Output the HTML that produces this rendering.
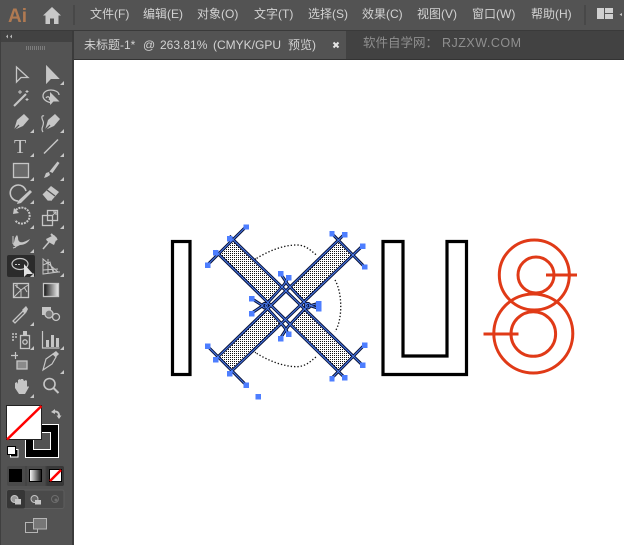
<!DOCTYPE html>
<html><head><meta charset="utf-8">
<style>
html,body{margin:0;padding:0;width:624px;height:545px;overflow:hidden;background:#fff}
svg{position:absolute;left:0;top:0}
text{font-family:"Liberation Sans","Noto Sans CJK SC",sans-serif}
</style></head><body>
<svg width="624" height="545" viewBox="0 0 624 545" xmlns="http://www.w3.org/2000/svg">
<defs>
<pattern id="dots" width="6" height="6" patternUnits="userSpaceOnUse"><rect width="6" height="6" fill="#fff"/><rect width="3" height="3" fill="#111"/></pattern>
</defs>
<!-- chrome -->
<rect width="624" height="545" fill="#535353"/>
<rect x="0" y="30" width="624" height="1" fill="#3a3a3a"/>
<rect x="72" y="31" width="2" height="514" fill="#3b3b3b"/>
<rect x="0" y="31" width="1" height="514" fill="#3f3f3f"/>
<rect x="1" y="31" width="71" height="11" fill="#424242"/>
<rect x="74" y="31" width="550" height="29" fill="#424242"/>
<rect x="74" y="31" width="272" height="28" fill="#535353"/>
<rect x="74" y="59" width="550" height="1" fill="#333"/>
<rect x="74" y="60" width="550" height="485" fill="#fff"/>
<!-- top bar -->
<text x="8" y="22" font-size="19" font-weight="bold" fill="#b07a52">Ai</text>
<path d="M43 15.500L52 7l9 8.500h-2.500V24h-4.500v-5.500h-4V24H45.500v-8.500z" fill="#c8c8c8"/>
<rect x="73" y="5" width="2" height="20" fill="#484848"/>
<g font-size="12" fill="#d2d2d2">
<text x="90" y="18">文件(F)</text><text x="143" y="18">编辑(E)</text><text x="197" y="18">对象(O)</text><text x="254" y="18">文字(T)</text><text x="308" y="18">选择(S)</text><text x="362" y="18">效果(C)</text><text x="417" y="18">视图(V)</text><text x="472" y="18">窗口(W)</text><text x="531" y="18">帮助(H)</text>
</g>
<rect x="584" y="5" width="2" height="20" fill="#484848"/>
<rect x="597" y="8" width="7" height="11" fill="#d0d0d0"/><rect x="605" y="8" width="8" height="5" fill="#d0d0d0"/><rect x="605" y="14" width="8" height="5" fill="#d0d0d0"/>
<path d="M622 13l-2.500 1.500 2.500 1.500z" fill="#c8c8c8"/>
<!-- tabs -->
<text y="49" font-size="12" fill="#d2d2d2"><tspan x="84">未标题-1*</tspan><tspan x="143">@</tspan><tspan x="160">263.81%</tspan><tspan x="213">(CMYK/GPU</tspan><tspan x="288">预览)</tspan></text>
<path d="M333.500 42.500l5 5m0-5l-5 5" stroke="#e6e6e6" stroke-width="2" fill="none"/>
<text y="47" font-size="12.500" fill="#8f8f8f"><tspan x="363">软件自学网：</tspan><tspan x="442" letter-spacing="0.500">RJZXW.COM</tspan></text>
<!-- toolbar header -->
<path d="M8 34.500l-2 2 2 2zM12 34.500l-2 2 2 2z" fill="#b8b8b8"/>
<g fill="#7c7c7c"><rect x="26" y="46" width="1" height="4"/><rect x="28" y="46" width="1" height="4"/><rect x="30" y="46" width="1" height="4"/><rect x="32" y="46" width="1" height="4"/><rect x="34" y="46" width="1" height="4"/><rect x="36" y="46" width="1" height="4"/><rect x="38" y="46" width="1" height="4"/><rect x="40" y="46" width="1" height="4"/><rect x="42" y="46" width="1" height="4"/><rect x="44" y="46" width="1" height="4"/></g>
<!-- active tool -->
<rect x="7" y="255" width="28" height="22" rx="2" fill="#2b2b2b"/>
<!-- tool icons -->
<g fill="none" stroke="#c6c6c6" stroke-width="1.300">
<path d="M16.500 67v15l4.500-4.500h7z"/>
<path d="M46.700 66.500v16l4-4.200h7.500z" fill="#c6c6c6"/>
<path d="M14 106L26 94" stroke-width="2"/><path d="M20 90v4M18 92h4M27 90v3M25.500 91.500h3M27 98v3M25.500 99.500h3" stroke-width="1"/>
<path d="M52 103c-6-1-9-4-9-7 0-4 4-6 8-6s8 2 8 5M46 98c2-3 5 0 3 2" stroke-width="1.300"/><path d="M50 92v13l3.500-3.500h6z" fill="#c6c6c6" stroke="none"/>
<path d="M14 130l3-10 7-6 5 5-6 7z" fill="#c6c6c6" stroke="none"/><path d="M14 130l5-5" stroke="#535353"/>
<path d="M43 132c-3-4 2-7 0-11s-1-6 1-5" stroke-width="1.200"/><path d="M45 130l3-10 7-6 5 5-6 7z" fill="#c6c6c6" stroke="none"/><path d="M45 130l5-5" stroke="#535353"/>
<text x="14" y="153" font-size="20" style="font-family:'Liberation Serif',serif" fill="#c6c6c6" stroke="none">T</text>
<path d="M44 153.500L58 139.500" stroke-width="1.500"/>
<rect x="13.500" y="163.500" width="15" height="14" fill="#6a6a6a" stroke-width="1.300"/>
<path d="M44 178l2-5 3-1 1 3-3 2zM49.500 171.500l8-10 2 1.500-7 10z" fill="#c6c6c6" stroke="none"/>
<path d="M26 191a8 8 0 1 0-8 10" stroke-width="1.600"/><path d="M18 201l12-11 2 2-11 11-4 1z" fill="#c6c6c6" stroke="none"/>
<path d="M43 194l8-8 8 6-7 8h-4z" fill="#c6c6c6" stroke="none"/><path d="M47 190l8 6" stroke="#535353"/><path d="M43 194l5 6h4" stroke="#c6c6c6"/>
<path d="M16 210a8 8 0 1 1-1 10" stroke-dasharray="2 1" stroke-width="2"/><path d="M14 208l-1 6 6-1z" fill="#c6c6c6" stroke="none"/>
<rect x="42.500" y="215.500" width="10" height="10"/><rect x="47.500" y="210.500" width="10" height="10"/><path d="M52 216l4-4M53 212h3v3" stroke-width="1"/>
<path d="M13 245c2-4 1-7 4-10 2 3 0 5 3 7 3 1 6-1 10-3-2 4-6 6-10 6l-4 2z" fill="#c6c6c6" stroke="none"/><path d="M13 236v8M16 247l-3 1" stroke-width="1"/>
<path d="M43 249l6-7" stroke-width="1.500"/><path d="M46 239l8-4 3 3-3 7-2-1-5-3z" fill="#c6c6c6" stroke="none"/><path d="M51 234l6 6" stroke-width="2"/>
<ellipse cx="20" cy="264" rx="8" ry="5.500" stroke-width="1.200"/><path d="M15 264.500h5" stroke-width="1" stroke-dasharray="2 1"/><path d="M24 264v13l3-3h6z" fill="#e0e0e0" stroke="none"/>
<path d="M43 259v15l15-2-15-13zM48 259v14M43 265l7-3 3 10M43 270l15-1" stroke-width="1"/><path d="M50 264l4 8h6" stroke-width="1"/>
<rect x="13.500" y="283.500" width="15" height="14"/><path d="M14 297l7-7 7-5M21 290v7M21 290l-6-5M17 288v-4M24 287l3 5" stroke-width="1"/>
<defs><linearGradient id="gr" x1="0" x2="1"><stop offset="0" stop-color="#111"/><stop offset="1" stop-color="#eee"/></linearGradient></defs>
<rect x="43.500" y="283.500" width="15" height="13" fill="url(#gr)"/>
<path d="M13 321l2 2 10-10-2-2z" stroke-width="1.300"/><path d="M22 310l4-4 2 3-2 4z" fill="#c6c6c6" stroke="none"/>
<path d="M42 307h9v8h-9z" fill="#c6c6c6" stroke="none"/><circle cx="49" cy="314" r="4" fill="#777" stroke="#c6c6c6"/><circle cx="56" cy="317" r="3.500" fill="#535353"/>
<path d="M12 334h2M15 334h2M12 337h2M15 337h2M12 340h2" stroke-width="1.500"/><rect x="20.500" y="335.500" width="9" height="13"/><circle cx="25" cy="342" r="2.200"/><rect x="23" y="331" width="4" height="4" fill="#c6c6c6" stroke="none"/>
<path d="M42.500 331v17h17" stroke-width="1.200"/><rect x="46" y="340" width="3" height="7" fill="#c6c6c6" stroke="none"/><rect x="51" y="335" width="3" height="12" fill="#c6c6c6" stroke="none"/><rect x="56" y="338" width="3" height="9" fill="#c6c6c6" stroke="none"/>
<path d="M11 355.500h7M15.500 352v7" stroke-width="1.200"/><path d="M17 361h10v8H17z" fill="#8a8a8a" stroke="#c6c6c6"/>
<path d="M43 370l3-11 7-5 3 3-4 7z" stroke-width="1.200"/><path d="M52 354l4-3 3 3-3 3z" fill="#c6c6c6" stroke="none"/>
<path d="M15 386v-5l2-1 1 2v-4l2-1 1 1v-1h2l1 2 2-1 1 1v6l1-1 1 1-4 7h-6z" fill="#c6c6c6" stroke="none" transform="translate(0,2)"/>
<circle cx="49.500" cy="384" r="5.500" stroke-width="1.600"/><path d="M53.500 388l5 5" stroke-width="2"/>
</g>
<!-- flyout triangles -->
<g fill="#c6c6c6">
<path d="M64 81v4h-4z"/>
<path d="M34 129v4h-4zM64 129v4h-4zM34 153v4h-4zM64 153v4h-4zM34 177v4h-4zM64 177v4h-4zM34 200v4h-4zM64 200v4h-4zM34 225v4h-4zM64 225v4h-4zM34 249v4h-4zM64 249v4h-4zM34 273v4h-4zM64 273v4h-4zM34 322v4h-4zM34 346v4h-4zM64 346v4h-4zM64 370v4h-4zM34 394v4h-4z"/>
</g>
<!-- color area -->
<path d="M56 409l-4 3 4 2v-1.500c2 0 3 1 3 3h-1.500l2.500 3.500 2.500-3.500H61c0-3-2-5-5-5z" fill="#c6c6c6" transform="translate(-1,0)"/>
<rect x="25.500" y="424.500" width="33" height="33" fill="#000" stroke="#fff"/>
<rect x="33.500" y="432.500" width="17" height="17" fill="#535353" stroke="#fff"/>
<rect x="6.500" y="405.500" width="35" height="34" fill="#fff" stroke="#222"/>
<path d="M7 439.500L41.500 406" stroke="#f00" stroke-width="2.500"/>
<rect x="10.500" y="449.500" width="7.500" height="7.500" fill="#000" stroke="#fff"/>
<rect x="7.500" y="446.500" width="8" height="8" fill="#fff" stroke="#000"/>
<!-- colour mode row -->
<rect x="7" y="466" width="57" height="20" rx="2" fill="#4a4a4a"/>
<rect x="46" y="466" width="18" height="20" rx="2" fill="#383838"/>
<rect x="25.500" y="466" width="1" height="20" fill="#3f3f3f"/><rect x="45.500" y="466" width="1" height="20" fill="#3f3f3f"/>
<rect x="9" y="469" width="13" height="13" fill="#000"/>
<defs><linearGradient id="gw" x1="0" x2="1"><stop offset="0" stop-color="#fff"/><stop offset="1" stop-color="#111"/></linearGradient></defs>
<rect x="29.500" y="469.500" width="12" height="12" fill="url(#gw)" stroke="#000"/>
<rect x="49.500" y="469.500" width="12" height="12" fill="#fff" stroke="#000"/>
<path d="M50 481L61 470" stroke="#f00" stroke-width="2.500"/>
<!-- draw modes -->
<rect x="7" y="490" width="57" height="18.500" rx="2" fill="#4a4a4a" stroke="#5d5d5d"/>
<rect x="7" y="490" width="18" height="18.500" rx="2" fill="#363636"/>
<circle cx="14.500" cy="499" r="3.500" fill="#999" stroke="#c6c6c6"/><rect x="15" y="499" width="6" height="5.500" fill="#c6c6c6"/>
<circle cx="34.500" cy="499" r="3.500" fill="#666" stroke="#c6c6c6"/><rect x="35" y="500" width="6" height="4.500" fill="#c6c6c6"/>
<circle cx="55" cy="499" r="3.500" fill="#4a4a4a" stroke="#6d6d6d"/><circle cx="56" cy="500" r="1.500" fill="#6d6d6d"/>
<!-- screen mode -->
<rect x="25.500" y="522.500" width="12" height="10" fill="none" stroke="#b5b5b5"/>
<rect x="33.500" y="518.500" width="13" height="10.500" fill="#777" stroke="#b5b5b5"/>

<!-- artwork: I -->
<rect x="172.500" y="241.500" width="17.500" height="133" fill="#fff" stroke="#000" stroke-width="3.200"/>
<!-- U -->
<path d="M383 241.500H403V356H447V241.500H466.500V374.500H383Z" fill="#fff" stroke="#000" stroke-width="3.200"/>
<!-- 8 -->
<g fill="none" stroke="#e03a17" stroke-width="3">
<circle cx="534.300" cy="275" r="35"/>
<circle cx="536" cy="275" r="18"/>
<circle cx="533.300" cy="333.500" r="39.500"/>
<circle cx="533.300" cy="334" r="22.300"/>
<path d="M546 275H577M483.500 334H518.500"/>
</g>
<!-- X artwork -->
<g transform="translate(200,225) scale(0.33333)">
<g fill="none" stroke="#111" stroke-width="4" stroke-dasharray="4 6">
<path d="M170 100C205 78 250 60 290 60C320 60 335 80 352 92"/>
<path d="M405 165C428 205 428 285 405 320"/>
<path d="M170 385C205 407 250 425 290 425C320 425 335 405 352 393"/>
<path d="M365 108L385 120M365 378L385 365M150 112L170 100M150 372L170 385" stroke-dasharray="3 3"/>
</g>
<!-- band fills -->
<g fill="url(#dots)" shape-rendering="crispEdges">
<path d="M58 90L102 47L245 187L203 231Z"/>
<path d="M458 90L414 47L271 187L313 231Z"/>
<path d="M58 394L100 437L245 297L203 253Z"/>
<path d="M458 394L415 437L271 297L313 253Z"/>
</g>
<g fill="none" stroke="#081238" stroke-width="9">
<path d="M22 120L138 5M395 25L493 125M22 363L138 480M493 360L395 460"/>
<path d="M46 78L433 457M88 33L487 420M487 63L88 445M433 28L46 403"/>
<circle cx="195" cy="242" r="7"/><circle cx="323" cy="242" r="7"/>
<path d="M195 242L253 178L265 157M323 242L263 178L241 145M195 242L253 306L265 327M323 242L263 306L241 340"/>
<path d="M154 220L188 242L154 265M355 235L330 242L355 250"/>
</g>
<g fill="none" stroke="#4a7cf0" stroke-width="3">
<path d="M22 120L138 5M395 25L493 125M22 363L138 480M493 360L395 460"/>
<path d="M46 78L433 457M88 33L487 420M487 63L88 445M433 28L46 403"/>
<circle cx="195" cy="242" r="7"/><circle cx="323" cy="242" r="7"/>
<path d="M195 242L253 178L265 157M323 242L263 178L241 145M195 242L253 306L265 327M323 242L263 306L241 340"/>
<path d="M154 220L188 242L154 265M355 235L330 242L355 250"/>
</g>
<!-- handles -->
<g fill="#4d7eff" shape-rendering="crispEdges">
<rect x="15" y="113" width="16" height="16"/><rect x="39" y="75" width="16" height="16"/><rect x="81" y="33" width="16" height="16"/><rect x="131" y="-2" width="16" height="16"/>
<rect x="388" y="18" width="16" height="16"/><rect x="426" y="21" width="16" height="16"/><rect x="480" y="56" width="16" height="16"/><rect x="486" y="118" width="16" height="16"/>
<rect x="15" y="356" width="16" height="16"/><rect x="39" y="396" width="16" height="16"/><rect x="81" y="438" width="16" height="16"/><rect x="131" y="473" width="16" height="16"/>
<rect x="486" y="353" width="16" height="16"/><rect x="480" y="413" width="16" height="16"/><rect x="426" y="450" width="16" height="16"/><rect x="388" y="453" width="16" height="16"/>
<rect x="167" y="507" width="16" height="16"/>
<rect x="234" y="138" width="16" height="16"/><rect x="258" y="150" width="16" height="16"/><rect x="147" y="213" width="16" height="16"/><rect x="147" y="258" width="16" height="16"/><rect x="348" y="228" width="16" height="16"/><rect x="348" y="243" width="16" height="16"/><rect x="234" y="333" width="16" height="16"/><rect x="258" y="320" width="16" height="16"/>
</g>
</g>
</svg>
</body></html>
